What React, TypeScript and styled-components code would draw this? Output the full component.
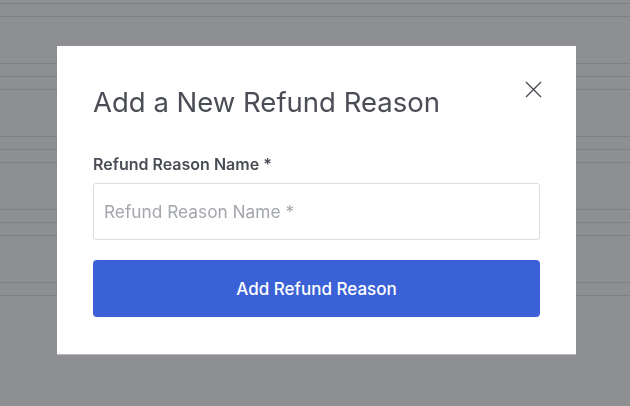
import React from "react";
import styled, { createGlobalStyle } from "styled-components";

const Global = createGlobalStyle`
  html, body { margin: 0; padding: 0; }
  body {
    width: 630px;
    height: 406px;
    overflow: hidden;
    background: #8e8f93;
    font-family: Inter, "Liberation Sans", Arial, sans-serif;
  }
`;

const Page = styled.div`
  display: flex;
  flex-direction: column;
  margin-top: -10px;
`;

const Group = styled.div`
  display: flex;
  flex-direction: column;
  gap: 12px;
  height: 73px;
`;

const Rule = styled.div`
  height: 1px;
  background: #7f8085;
`;

const Overlay = styled.div`
  position: fixed;
  inset: 0;
  display: flex;
  align-items: flex-start;
  justify-content: flex-start;
  padding: 46px 0 0 57px;
`;

const Modal = styled.div`
  position: relative;
  box-sizing: border-box;
  width: 519px;
  height: 308px;
  background: #ffffff;
  padding: 38px 36px 0 36px;
  display: flex;
  flex-direction: column;
  box-shadow: 0 1px 0 #b8b9bd;
`;

const Title = styled.h2`
  margin: 0;
  font-size: 27.5px;
  line-height: 36px;
  font-weight: 400;
  color: #4a4d55;
  letter-spacing: 0;
`;

const Close = styled.button`
  position: absolute;
  top: 34px;
  right: 34px;
  width: 18px;
  height: 18px;
  padding: 0;
  border: 0;
  background: none;
  display: flex;
  align-items: center;
  justify-content: center;
  cursor: pointer;
`;

const Label = styled.label`
  margin-top: 34px;
  font-size: 16px;
  line-height: 20px;
  font-weight: 600;
  color: #4a4d55;
`;

const Input = styled.input`
  margin-top: 9px;
  box-sizing: border-box;
  width: 100%;
  height: 57px;
  border: 1px solid #dcdde0;
  border-radius: 3px;
  padding: 0 10px;
  font-family: inherit;
  font-size: 17.3px;
  color: #4a4d55;
  outline: none;
  &::placeholder {
    color: #a3a6ac;
  }
`;

const Submit = styled.button`
  margin-top: 20px;
  width: 100%;
  height: 57px;
  border: 0;
  border-radius: 4px;
  background: #3b61d6;
  color: #ffffff;
  font-family: inherit;
  font-size: 17px;
  font-weight: 500;
  cursor: pointer;
`;

const groups = [3, 3, 3, 3, 2];

export default function App() {
  return (
    <>
      <Global />
      <Page>
        {groups.map((n, i) => (
          <Group key={i}>
            {Array.from({ length: n }).map((_, j) => (
              <Rule key={j} />
            ))}
          </Group>
        ))}
      </Page>
      <Overlay>
        <Modal>
          <Title>Add a New Refund Reason</Title>
          <Close aria-label="Close">
            <svg width="17" height="17" viewBox="0 0 17 17">
              <path d="M1 1 L16 16 M16 1 L1 16" stroke="#4a4d55" strokeWidth="1.4" fill="none" />
            </svg>
          </Close>
          <Label htmlFor="rr">Refund Reason Name *</Label>
          <Input id="rr" placeholder="Refund Reason Name *" />
          <Submit>Add Refund Reason</Submit>
        </Modal>
      </Overlay>
    </>
  );
}
